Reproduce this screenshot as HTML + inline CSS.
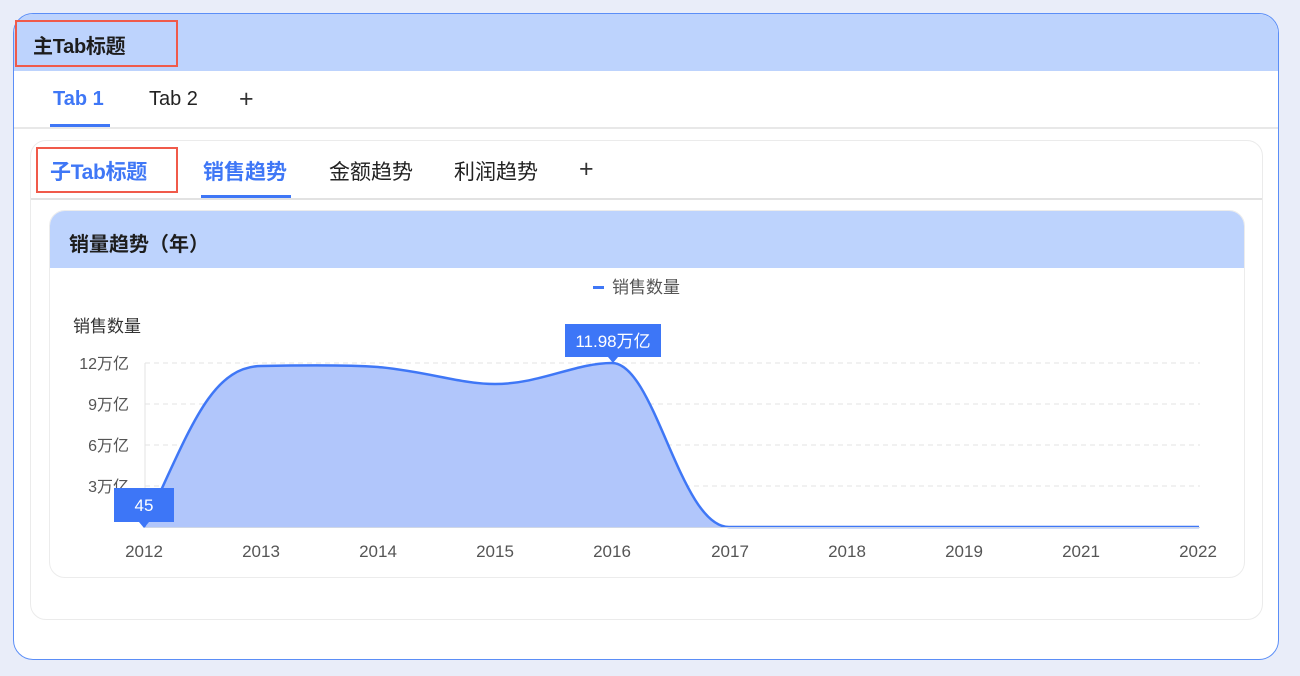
<!DOCTYPE html>
<html><head><meta charset="utf-8"><style>
*{margin:0;padding:0;box-sizing:border-box}
body{width:1300px;height:676px;background:#e9edf9;font-family:"Liberation Sans","Noto Sans CJK SC",sans-serif;position:relative;overflow:hidden}
.abs{position:absolute}
</style></head><body>
<div class="abs" style="left:13px;top:13px;width:1266px;height:647px;border:1px solid #5b8ef7;border-radius:20px;background:#fff;overflow:hidden">
  <div class="abs" style="left:0;top:0;width:100%;height:57px;background:#bdd3fd"></div>
  <div class="abs" style="left:19px;top:16px;font-size:20px;font-weight:bold;color:#1d1d1d;letter-spacing:-0.3px">主Tab标题</div>
  <div class="abs" style="left:39px;top:74px;font-size:20px;font-weight:bold;color:#3f77f6">Tab 1</div>
  <div class="abs" style="left:135px;top:74px;font-size:20px;color:#222">Tab 2</div>
  <div class="abs" style="left:225px;top:71px;font-size:25px;color:#333;font-weight:300">+</div>
  <div class="abs" style="left:36px;top:110px;width:60px;height:3px;background:#3f77f6"></div>
  <div class="abs" style="left:0;top:113px;width:100%;height:2px;background:#e8e8e8"></div>
  <div class="abs" style="left:16px;top:126px;width:1233px;height:480px;border:1px solid #ebebeb;border-radius:16px"></div>
  <div class="abs" style="left:36px;top:142px;font-size:21px;font-weight:bold;color:#3f77f6;letter-spacing:-0.3px">子Tab标题</div>
  <div class="abs" style="left:189px;top:142px;font-size:21px;font-weight:bold;color:#3f77f6">销售趋势</div>
  <div class="abs" style="left:315px;top:142px;font-size:21px;color:#222">金额趋势</div>
  <div class="abs" style="left:440px;top:142px;font-size:21px;color:#222">利润趋势</div>
  <div class="abs" style="left:565px;top:141px;font-size:25px;color:#333;font-weight:300">+</div>
  <div class="abs" style="left:187px;top:181px;width:90px;height:3px;background:#3f77f6"></div>
  <div class="abs" style="left:17px;top:184px;width:1231px;height:2px;background:#e2e2e2"></div>
  <div class="abs" style="left:35px;top:196px;width:1196px;height:368px;border:1px solid #ececec;border-radius:16px;overflow:hidden">
    <div class="abs" style="left:0;top:0;width:100%;height:57px;background:#bdd3fd"></div>
    <div class="abs" style="left:19px;top:17px;font-size:20px;font-weight:bold;color:#1d1d1d">销量趋势（年）</div>
  </div>
</div>
<div class="abs" style="top:20px;height:47px;left:15px;width:163px;border:2px solid #f05a4a"></div>
<div class="abs" style="left:36px;top:147px;width:142px;height:46px;border:2px solid #f05a4a"></div>
<svg class="abs" style="left:0;top:0" width="1300" height="676" font-family="Liberation Sans,Noto Sans CJK SC,sans-serif">
  <rect x="593" y="286" width="11" height="3" fill="#3f77f6"/>
  <text x="612" y="293" font-size="17" fill="#555">销售数量</text>
  <text x="73" y="332" font-size="17" fill="#333">销售数量</text>
  <g stroke="#e3e3e3" stroke-dasharray="5,4">
    <line x1="145" y1="363" x2="1200" y2="363"/><line x1="145" y1="404" x2="1200" y2="404"/>
    <line x1="145" y1="445" x2="1200" y2="445"/><line x1="145" y1="486" x2="1200" y2="486"/>
  </g>
  <line x1="145" y1="363" x2="145" y2="527" stroke="#e3e3e3"/>
  <g font-size="16" fill="#555" text-anchor="end">
    <text x="129" y="369">12万亿</text><text x="129" y="410">9万亿</text>
    <text x="129" y="451">6万亿</text><text x="129" y="492">3万亿</text>
  </g>
  <path d="M144,527 C190,430 210,367 261,366 C310,365 350,365 378,367 C430,372 460,384 495,384 C540,384 575,363 612,363 C655,363 680,527 729,527 L1199,527 L1199,527 L144,527 Z" fill="#b1c6fb"/>
  <path d="M144,527 C190,430 210,367 261,366 C310,365 350,365 378,367 C430,372 460,384 495,384 C540,384 575,363 612,363 C655,363 680,527 729,527 L1199,527" fill="none" stroke="#3f77f6" stroke-width="2.5"/>
  <line x1="144" y1="527.5" x2="1200" y2="527.5" stroke="#cfd7e6"/>
  <g font-size="17" fill="#555" text-anchor="middle">
    <text x="144" y="557">2012</text><text x="261" y="557">2013</text><text x="378" y="557">2014</text>
    <text x="495" y="557">2015</text><text x="612" y="557">2016</text><text x="730" y="557">2017</text>
    <text x="847" y="557">2018</text><text x="964" y="557">2019</text><text x="1081" y="557">2021</text><text x="1198" y="557">2022</text>
  </g>
  <rect x="565" y="324" width="96" height="33" fill="#3d76f7"/>
  <path d="M608,357 L613,363 L618,357Z" fill="#3d76f7"/>
  <text x="613" y="347" font-size="17" fill="#fff" text-anchor="middle">11.98万亿</text>
  <rect x="114" y="488" width="60" height="34" fill="#3d76f7"/>
  <path d="M139,522 L144,528 L149,522Z" fill="#3d76f7"/>
  <text x="144" y="511" font-size="17" fill="#fff" text-anchor="middle">45</text>
</svg>
</body></html>
